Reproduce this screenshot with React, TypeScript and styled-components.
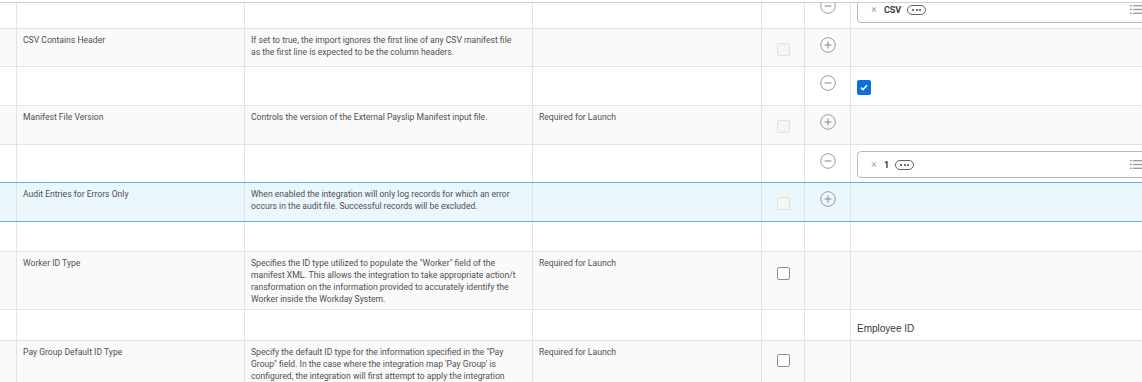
import React from 'react';
import styled, { createGlobalStyle, css } from 'styled-components';

const GlobalStyle = createGlobalStyle`
  html, body {
    margin: 0;
    padding: 0;
    background: #ffffff;
  }
  body {
    font-family: Roboto, "Noto Sans", "Liberation Sans", sans-serif;
    color: #444;
  }
`;

type Tone = 'white' | 'gray' | 'selected';

// Page frame
const Page = styled.div`
  width: 1142px;
  height: 382px;
  display: flex;
  flex-direction: column;
  overflow: hidden;
`;

const TopEdge = styled.div`
  height: 2px;
  flex: none;
  border-bottom: 1px solid #cfcfcf;
`;

const Viewport = styled.div`
  flex: 1;
  overflow: hidden;
`;

const Table = styled.div`
  display: flex;
  flex-direction: column;
  margin-top: -13px;
`;

const Row = styled.div<{ $h: number; $tone: Tone }>`
  display: grid;
  grid-template-columns: 17px 228px 288px 229px 43px 46px 1fr;
  height: ${(p) => p.$h}px;
  box-sizing: border-box;
  border-bottom: 1px solid #e3e3e3;
  background: ${(p) =>
    p.$tone === 'gray' ? '#fafafa' : p.$tone === 'selected' ? '#eaf7fc' : '#ffffff'};
  ${(p) =>
    p.$tone === 'selected' &&
    css`
      border-bottom-color: #62b0e6;
      box-shadow: 0 -1px 0 #62b0e6;
    `}
`;

const Cell = styled.div<{ $last?: boolean }>`
  box-sizing: border-box;
  border-right: ${(p) => (p.$last ? 'none' : '1px solid #e3e3e3')};
  overflow: hidden;
  min-width: 0;
`;

const TextCell = styled(Cell)`
  padding: 5px 0 0 6px;
  font-size: 8.6px;
  line-height: 12px;
  color: #505050;
  white-space: nowrap;
`;

const CenterCell = styled(Cell)<{ $top: number }>`
  display: flex;
  justify-content: center;
  align-items: flex-start;
  padding-top: ${(p) => p.$top}px;
`;

const ValueCell = styled(Cell)`
  display: flex;
  align-items: flex-start;
  padding: 6px 0 0 6px;
`;

const Check = styled.span<{ $enabled?: boolean }>`
  display: block;
  width: 13px;
  height: 13px;
  box-sizing: border-box;
  border-radius: 2px;
  border: 1px solid ${(p) => (p.$enabled ? '#8a8f96' : '#e0e0e0')};
  background: ${(p) => (p.$enabled ? '#ffffff' : '#f6f6f6')};
`;

const CheckedBox = styled.span`
  display: flex;
  align-items: center;
  justify-content: center;
  width: 14px;
  height: 15px;
  margin-top: 7px;
  border-radius: 2px;
  background: #0b70de;
`;

const MultiInput = styled.div`
  display: flex;
  align-items: center;
  gap: 5px;
  width: 300px;
  height: 27px;
  flex: none;
  box-sizing: border-box;
  padding-left: 13px;
  border: 1px solid #b6b9bd;
  border-radius: 4px;
  background: #ffffff;
  font-size: 9px;
  font-weight: 700;
  color: #3a3a3a;
`;

const Remove = styled.span`
  font-size: 11px;
  font-weight: 400;
  color: #a9a9a9;
  margin-right: 2px;
  line-height: 1;
`;

const Dots = styled.span`
  display: inline-flex;
  align-items: center;
  justify-content: center;
  gap: 1.5px;
  width: 19px;
  height: 10px;
  box-sizing: border-box;
  border: 1px solid #5f6368;
  border-radius: 6px;
  margin-left: 1px;
`;

const Dot = styled.span`
  width: 2px;
  height: 2px;
  border-radius: 50%;
  background: #4a4a4a;
`;

const ListIcon = styled.svg`
  margin-left: auto;
  margin-right: 14px;
  flex: none;
`;

const PlainValue = styled.span`
  margin-top: 7px;
  font-family: "Liberation Sans", Arial, sans-serif;
  font-size: 10px;
  line-height: 12px;
  color: #3a3a3a;
`;

const CircleIcon = ({ minus }: { minus?: boolean }) => (
  <svg width="16" height="16" viewBox="0 0 16 16">
    <circle cx="8" cy="8" r="7.3" fill="none" stroke="#9b9b9b" strokeWidth="1" />
    <line x1="4.6" y1="8" x2="11.4" y2="8" stroke="#8f8f8f" strokeWidth="1.1" />
    {!minus && <line x1="8" y1="4.6" x2="8" y2="11.4" stroke="#8f8f8f" strokeWidth="1.1" />}
  </svg>
);

const Chip = ({ label }: { label: string }) => (
  <MultiInput>
    <Remove>×</Remove>
    {label}
    <Dots>
      <Dot />
      <Dot />
      <Dot />
    </Dots>
    <ListIcon width="12" height="11" viewBox="0 0 12 11">
      <rect x="0" y="1" width="2" height="1.4" fill="#9aa0a6" />
      <rect x="3" y="1" width="9" height="1.4" fill="#9aa0a6" />
      <rect x="0" y="4.8" width="2" height="1.4" fill="#9aa0a6" />
      <rect x="3" y="4.8" width="9" height="1.4" fill="#9aa0a6" />
      <rect x="0" y="8.6" width="2" height="1.4" fill="#9aa0a6" />
      <rect x="3" y="8.6" width="9" height="1.4" fill="#9aa0a6" />
    </ListIcon>
  </MultiInput>
);

type Field = {
  label: string;
  desc: string[];
  req?: boolean;
  enabled?: boolean;
  plus?: boolean;
  h: number;
  tone: Tone;
  checkTop: number;
};

const FieldRow = ({ f }: { f: Field }) => (
  <Row $h={f.h} $tone={f.tone}>
    <Cell />
    <TextCell>{f.label}</TextCell>
    <TextCell>
      {f.desc.map((d) => (
        <div key={d}>{d}</div>
      ))}
    </TextCell>
    <TextCell>{f.req ? 'Required for Launch' : ''}</TextCell>
    <CenterCell $top={f.checkTop}>
      <Check $enabled={f.enabled} />
    </CenterCell>
    <CenterCell $top={8}>{f.plus && <CircleIcon />}</CenterCell>
    <Cell $last />
  </Row>
);

const ValueRow = ({
  h,
  minus,
  children,
}: {
  h: number;
  minus?: boolean;
  children?: React.ReactNode;
}) => (
  <Row $h={h} $tone="white">
    <Cell />
    <Cell />
    <Cell />
    <Cell />
    <Cell />
    <CenterCell $top={8}>{minus && <CircleIcon minus />}</CenterCell>
    <ValueCell $last>{children}</ValueCell>
  </Row>
);

const fields: Record<string, Field> = {
  csv: {
    label: 'CSV Contains Header',
    desc: [
      'If set to true, the import ignores the first line of any CSV manifest file',
      'as the first line is expected to be the column headers.',
    ],
    plus: true,
    h: 38,
    tone: 'gray',
    checkTop: 14,
  },
  manifest: {
    label: 'Manifest File Version',
    desc: ['Controls the version of the External Payslip Manifest input file.'],
    req: true,
    plus: true,
    h: 39,
    tone: 'gray',
    checkTop: 14,
  },
  audit: {
    label: 'Audit Entries for Errors Only',
    desc: [
      'When enabled the integration will only log records for which an error',
      'occurs in the audit file. Successful records will be excluded.',
    ],
    plus: true,
    h: 39,
    tone: 'selected',
    checkTop: 14,
  },
  worker: {
    label: 'Worker ID Type',
    desc: [
      'Specifies the ID type utilized to populate the "Worker" field of the',
      'manifest XML. This allows the integration to take appropriate action/t',
      'ransformation on the information provided to accurately identify the',
      'Worker inside the Workday System.',
    ],
    req: true,
    enabled: true,
    h: 58,
    tone: 'gray',
    checkTop: 15,
  },
  payGroup: {
    label: 'Pay Group Default ID Type',
    desc: [
      'Specify the default ID type for the information specified in the "Pay',
      "Group\" field. In the case where the integration map 'Pay Group' is",
      'configured, the integration will first attempt to apply the integration',
    ],
    req: true,
    enabled: true,
    h: 60,
    tone: 'gray',
    checkTop: 13,
  },
};

export default function App() {
  return (
    <>
      <GlobalStyle />
      <Page>
        <TopEdge />
        <Viewport>
          <Table>
            <ValueRow h={39} minus>
              <Chip label="CSV" />
            </ValueRow>
            <FieldRow f={fields.csv} />
            <ValueRow h={39} minus>
              <CheckedBox>
                <svg width="8" height="7" viewBox="0 0 8 7">
                  <path d="M1 3.6 L3 5.6 L7 1.2" fill="none" stroke="#fff" strokeWidth="1.6" />
                </svg>
              </CheckedBox>
            </ValueRow>
            <FieldRow f={fields.manifest} />
            <ValueRow h={38} minus>
              <Chip label="1" />
            </ValueRow>
            <FieldRow f={fields.audit} />
            <ValueRow h={30} />
            <FieldRow f={fields.worker} />
            <ValueRow h={31}>
              <PlainValue>Employee ID</PlainValue>
            </ValueRow>
            <FieldRow f={fields.payGroup} />
          </Table>
        </Viewport>
      </Page>
    </>
  );
}
